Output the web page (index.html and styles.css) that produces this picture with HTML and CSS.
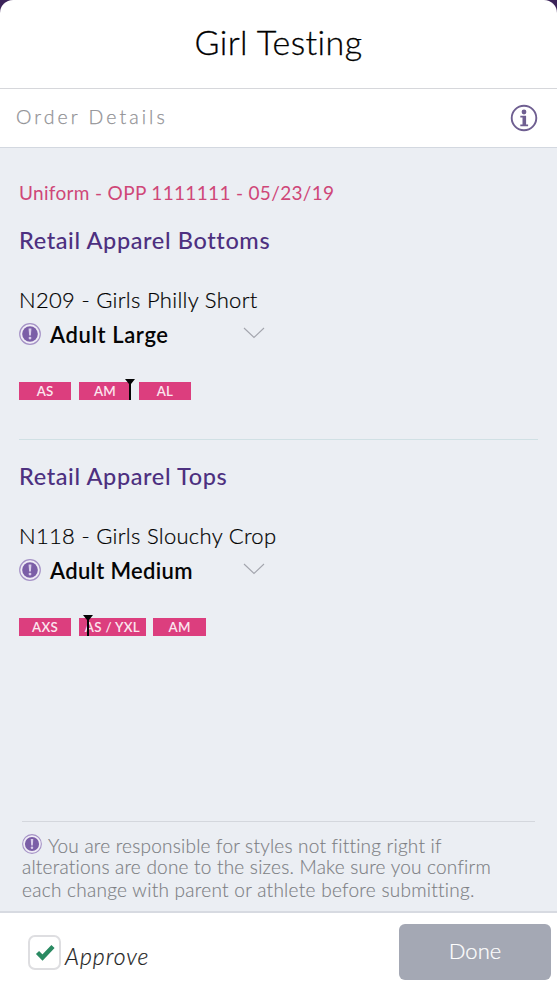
FILE: index.html
```html
<!DOCTYPE html>
<html lang="en">
<head>
<meta charset="utf-8">
<title>Girl Testing</title>
<link rel="stylesheet" href="styles.css">
</head>
<body>
<svg class="defs" aria-hidden="true">
  <symbol id="alert" viewBox="0 0 22 22">
    <circle cx="11" cy="11" r="10.3" fill="#f0edf6" stroke="#a592c6" stroke-width="1.2"/>
    <circle cx="11" cy="11" r="7.8" fill="#7b5ea7"/>
    <path d="M9.6 5.6h2.8l-.5 7h-1.8z" fill="#d9cdea"/>
    <circle cx="11" cy="15.1" r="1.4" fill="#d9cdea"/>
  </symbol>
  <symbol id="chevron" viewBox="0 0 22 12">
    <path d="M1 1l10 9.5L21 1" fill="none" stroke="#a3a5ad" stroke-width="1.1"/>
  </symbol>
  <symbol id="marker" viewBox="0 0 10 21">
    <path d="M0 0h10L6 5v16H4V5z" fill="#050505"/>
  </symbol>
</svg>
<div class="sheet">
  <header class="title-bar"><h1>Girl Testing</h1></header>
  <div class="sub-bar">
    <h2>Order Details</h2>
    <svg class="info" viewBox="0 0 28 28">
      <circle cx="14" cy="14" r="12.3" fill="none" stroke="#6f5f91" stroke-width="1.9"/>
      <circle cx="14" cy="8" r="2.4" fill="#6f5f91"/>
      <path d="M10.3 11.7h5.8v8.8h2v1.7h-7.8v-1.7h2.2v-7.1h-2.2z" fill="#6f5f91"/>
    </svg>
  </div>
  <main>
    <p class="order">Uniform - OPP 1111111 - 05/23/19</p>
    <section class="group">
      <h3>Retail Apparel Bottoms</h3>
      <p class="item">N209 - Girls Philly Short</p>
      <div class="select">
        <svg class="alert"><use href="#alert"/></svg>
        <strong class="large">Adult Large</strong>
        <svg class="chevron"><use href="#chevron"/></svg>
      </div>
      <div class="sizes">
        <span class="tag">AS</span>
        <span class="tag">AM<svg class="marker end"><use href="#marker"/></svg></span>
        <span class="tag">AL</span>
      </div>
    </section>
    <section class="group">
      <h3>Retail Apparel Tops</h3>
      <p class="item">N118 - Girls Slouchy Crop</p>
      <div class="select">
        <svg class="alert"><use href="#alert"/></svg>
        <strong>Adult Medium</strong>
        <svg class="chevron"><use href="#chevron"/></svg>
      </div>
      <div class="sizes">
        <span class="tag">AXS</span>
        <span class="tag wide">AS / YXL<svg class="marker start"><use href="#marker"/></svg></span>
        <span class="tag">AM</span>
      </div>
    </section>
    <div class="notice">
      <svg class="alert"><use href="#alert"/></svg>You are responsible for styles not fitting right if<br>
      alterations are done to the sizes. Make sure you confirm<br>
      <span class="last">each change with parent or athlete before submitting.</span>
    </div>
  </main>
  <footer>
    <label>
      <span class="box"><svg viewBox="0 0 20 18"><path d="M2.5 9.5l5 5L18 3.5" fill="none" stroke="#2a8a62" stroke-width="4.4"/></svg></span>
      <em>Approve</em>
    </label>
    <button type="button">Done</button>
  </footer>
</div>
</body>
</html>
```

FILE: styles.css
```css
* { box-sizing: border-box; }
body {
  margin: 0;
  background: #3b2359;
  font-family: Lato, "Open Sans", sans-serif;
  color: #0b0b0d;
}
h1, h2, h3, p { margin: 0; font-weight: 400; }
svg { display: block; flex: none; }
.defs { position: absolute; width: 0; height: 0; }
.sheet {
  height: 991px;
  display: flex;
  flex-direction: column;
  background: #fff;
  border-radius: 13px 13px 0 0;
  overflow: hidden;
}
.title-bar {
  height: 89px;
  padding-bottom: 4px;
  border-bottom: 1px solid #d6d7db;
  display: flex;
  align-items: center;
  justify-content: center;
}
h1 { font-size: 34px; font-weight: 300; line-height: 44px; letter-spacing: .42px; color: #000; -webkit-text-stroke: .3px #000; }
.sub-bar {
  height: 59px;
  padding: 0 19px 0 16px;
  border-bottom: 1px solid #d3d8e0;
  display: flex;
  align-items: center;
  justify-content: space-between;
}
h2 { font-size: 19.5px; font-weight: 300; letter-spacing: 3.05px; color: #929296; line-height: 24px; padding-bottom: 2px; -webkit-text-stroke: .25px #929296; }
.info { width: 28px; height: 28px; }
main {
  flex: 1;
  background: #ebeef3;
  padding: 32px 19px 0;
  display: flex;
  flex-direction: column;
}
.order { font-size: 19px; line-height: 26px; letter-spacing: .33px; color: #cf4778; }
.group { padding-top: 19px; height: 233px; }
.group + .group { height: 220px; border-top: 1px solid #d0e0e4; padding-top: 21px; }
h3 { font-size: 23.5px; line-height: 30px; letter-spacing: .62px; color: #4d3080; font-weight: 500; }
.item { font-size: 22px; font-weight: 300; line-height: 28px; margin-top: 31px; letter-spacing: .31px; color: #000; -webkit-text-stroke: .2px #000; }
.select { display: flex; align-items: center; height: 28px; margin-top: 6px; width: 246px; }
.alert { width: 22px; height: 22px; }
.select strong { font-size: 22px; font-weight: 600; margin-left: 9px; color: #050505; letter-spacing: .32px; }
.select .large { letter-spacing: .62px; }
.chevron { width: 22px; height: 12px; margin: -2px 0 0 auto; }
.sizes { display: flex; gap: 7.6px; margin-top: 34px; }
.tag {
  position: relative;
  width: 52.3px;
  height: 18px;
  background: #dc3e7e;
  color: #fbe6ef;
  font-size: 13.3px;
  font-weight: 600;
  line-height: 18px;
  letter-spacing: .3px;
  text-align: center;
}
.tag.wide { width: 67px; }
.marker { position: absolute; top: -3px; width: 10px; height: 21px; }
.marker.end { right: -4px; }
.marker.start { left: 4px; }
.notice {
  margin: auto 3px 10px;
  padding-top: 12px;
  border-top: 1px solid #d4d7dd;
  font-size: 19px;
  line-height: 22.3px;
  letter-spacing: .22px;
  color: #7d7f84;
  font-weight: 300;
  white-space: nowrap;
  -webkit-text-stroke: .15px #7d7f84;
}
.last { letter-spacing: .28px; }
.notice .alert { display: inline-block; width: 20px; height: 20px; margin-right: 6px; vertical-align: -1.5px; }
footer {
  height: 80px;
  border-top: 2px solid #d7dae1;
  padding: 0 6px 0 28px;
  display: flex;
  align-items: center;
  justify-content: space-between;
}
label { display: flex; align-items: center; }
.box {
  width: 33px;
  height: 35px;
  border: 2px solid #dedee1;
  border-radius: 7px;
  display: flex;
  align-items: center;
  justify-content: center;
}
.box svg { width: 20px; height: 18px; }
em { font-size: 23px; font-weight: 300; letter-spacing: 1px; margin: 7px 0 0 4px; color: #222; -webkit-text-stroke: .2px #222; }
button {
  width: 152px;
  height: 56px;
  padding: 0 1px 3px;
  border: 0;
  border-radius: 6px;
  background: #a4a8b4;
  color: #fff;
  font: 300 22px Lato, "Open Sans", sans-serif;
  -webkit-text-stroke: .2px #fff;
}
```
